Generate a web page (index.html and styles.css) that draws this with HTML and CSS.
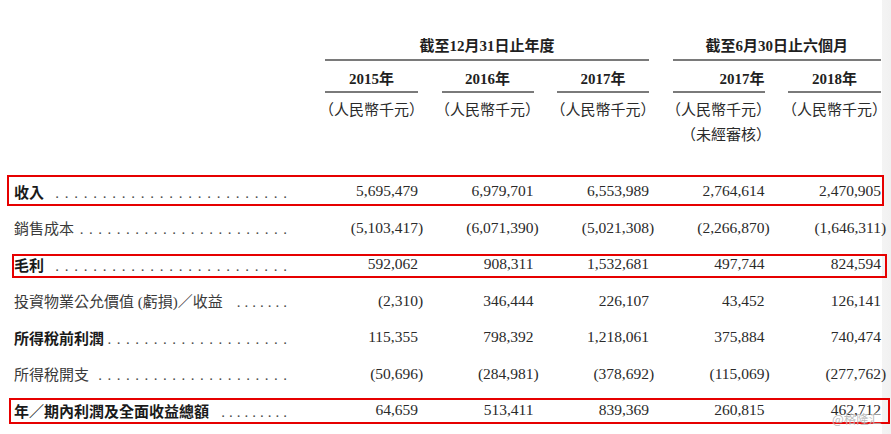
FILE: index.html
```html
<!DOCTYPE html>
<html lang="zh-Hant">
<head>
<meta charset="utf-8">
<title>財務資料</title>
<link rel="stylesheet" href="styles.css">
</head>
<body>
<div class="sheet">
  <div class="head">
    <div class="blank"></div>
    <div class="group g-year">截至12月31日止年度</div>
    <div class="group g-half">截至6月30日止六個月</div>

    <div class="blank"></div>
    <div class="year">2015年</div>
    <div class="year">2016年</div>
    <div class="year">2017年</div>
    <div class="year year-right">2017年</div>
    <div class="year">2018年</div>

    <div class="blank"></div>
    <div class="unit"><span>（人民幣千元）</span></div>
    <div class="unit"><span>（人民幣千元）</span></div>
    <div class="unit"><span>（人民幣千元）</span></div>
    <div class="unit unit-stack"><span>（人民幣千元）</span><span class="audit">（未經審核）</span></div>
    <div class="unit"><span>（人民幣千元）</span></div>
  </div>

  <div class="rows">
    <div class="row strong hl hl-1">
      <div class="label"><span class="txt">收入</span><span class="leader"><span>.........................</span></span></div>
      <div class="num">5,695,479</div>
      <div class="num">6,979,701</div>
      <div class="num">6,553,989</div>
      <div class="num">2,764,614</div>
      <div class="num">2,470,905</div>
    </div>
    <div class="row">
      <div class="label"><span class="txt">銷售成本</span><span class="leader tight"><span>.......................</span></span></div>
      <div class="num"><span class="neg">(5,103,417)</span></div>
      <div class="num"><span class="neg">(6,071,390)</span></div>
      <div class="num"><span class="neg">(5,021,308)</span></div>
      <div class="num"><span class="neg">(2,266,870)</span></div>
      <div class="num"><span class="neg">(1,646,311)</span></div>
    </div>
    <div class="row strong hl hl-2">
      <div class="label"><span class="txt">毛利</span><span class="leader"><span>.........................</span></span></div>
      <div class="num">592,062</div>
      <div class="num">908,311</div>
      <div class="num">1,532,681</div>
      <div class="num">497,744</div>
      <div class="num">824,594</div>
    </div>
    <div class="row">
      <div class="label"><span class="txt">投資物業公允價值 (虧損)／收益</span><span class="leader"><span class="short">.......</span></span></div>
      <div class="num"><span class="neg">(2,310)</span></div>
      <div class="num">346,444</div>
      <div class="num">226,107</div>
      <div class="num">43,452</div>
      <div class="num">126,141</div>
    </div>
    <div class="row strong">
      <div class="label"><span class="txt">所得稅前利潤</span><span class="leader tight"><span>....................</span></span></div>
      <div class="num">115,355</div>
      <div class="num">798,392</div>
      <div class="num">1,218,061</div>
      <div class="num">375,884</div>
      <div class="num">740,474</div>
    </div>
    <div class="row">
      <div class="label"><span class="txt">所得稅開支</span><span class="leader tight"><span>.....................</span></span></div>
      <div class="num"><span class="neg">(50,696)</span></div>
      <div class="num"><span class="neg">(284,981)</span></div>
      <div class="num"><span class="neg">(378,692)</span></div>
      <div class="num"><span class="neg">(115,069)</span></div>
      <div class="num"><span class="neg">(277,762)</span></div>
    </div>
    <div class="row strong hl hl-3">
      <div class="label"><span class="txt">年／期內利潤及全面收益總額</span><span class="leader"><span class="short">.........</span></span></div>
      <div class="num">64,659</div>
      <div class="num">513,411</div>
      <div class="num">839,369</div>
      <div class="num">260,815</div>
      <div class="num">462,712</div>
    </div>
  </div>

  <div class="watermark">@格隆汇</div>
</div>
</body>
</html>
```

FILE: styles.css
```css
html, body {
  margin: 0;
  padding: 0;
}

body {
  width: 891px;
  height: 434px;
  overflow: hidden;
  background: linear-gradient(to right, #ffffff 0, #ffffff 882px, #f4f4f4 882px, #f1f1f1 891px);
  font-family: "Liberation Serif", "Noto Sans CJK TC", serif;
  color: #2a2a2a;
}

.sheet {
  position: relative;
  width: 891px;
  height: 434px;
}

/* ---------- header ---------- */
.head {
  display: grid;
  grid-template-columns: 287.5px 93px 92px 92px 92px 93px;
  column-gap: 23.5px;
  padding-left: 14px;
  color: #1f1f1f;
  font-size: 15px;
}

.group {
  padding-top: 36px;
  padding-bottom: 3px;
  line-height: 20px;
  font-weight: 700;
  text-align: center;
  border-bottom: 2px solid #7a7a7a;
  white-space: nowrap;
}

.g-year {
  grid-column: 2 / 5;
}

.g-half {
  grid-column: 5 / 7;
}

.year {
  padding-top: 8px;
  padding-bottom: 2px;
  line-height: 20px;
  font-weight: 700;
  text-align: center;
  border-bottom: 2px solid #7a7a7a;
  white-space: nowrap;
}

.year-right {
  text-align: right;
}

.unit {
  padding-top: 5px;
  line-height: 25px;
  display: flex;
  flex-direction: column;
  align-items: center;
  white-space: nowrap;
  color: #2a2a2a;
}

.unit-stack {
  margin: 0 -6.5px;
  align-items: flex-end;
}

.audit {
  display: block;
}

/* ---------- body rows ---------- */
.rows {
  margin-top: 25px;
}

.row {
  position: relative;
  display: grid;
  grid-template-columns: 287.5px 93px 92px 92px 92px 93px;
  column-gap: 23.5px;
  padding-left: 14px;
  height: 36.5px;
  align-items: center;
}

.label {
  display: flex;
  align-items: baseline;
  font-size: 15px;
  color: #3a3a3a;
  white-space: nowrap;
  min-width: 0;
}

.strong .label {
  font-weight: 700;
  color: #1a1a1a;
}

.txt {
  flex: none;
}

.leader {
  flex: 1 1 auto;
  min-width: 0;
  display: flex;
  justify-content: flex-end;
  margin-left: 4px;
  padding-right: 14.5px;
  font-weight: 400;
  color: #4a4a4a;
}

.leader.tight {
  margin-left: 2px;
}

.leader > span {
  flex: none;
  letter-spacing: 5.75px;
  margin-right: -5.75px;
}

.leader.tight > span {
  letter-spacing: 5.5px;
  margin-right: -5.5px;
}

.leader > span.short {
  letter-spacing: 4px;
  margin-right: -4px;
}

.num {
  font-size: 15.5px;
  text-align: right;
  white-space: nowrap;
  color: #2a2a2a;
}

.neg {
  margin-right: -0.333em;
}

/* red annotation boxes drawn over the highlighted rows */
.hl::before {
  content: "";
  position: absolute;
  border: 2px solid #e60000;
  pointer-events: none;
}

.hl-1::before {
  top: 2px;
  bottom: 3.5px;
  left: 7px;
  right: 7px;
}

.hl-2::before {
  top: 8px;
  bottom: 4.5px;
  left: 12px;
  right: 4px;
}

.hl-3::before {
  top: 6px;
  bottom: 5px;
  left: 9px;
  right: 1px;
}

/* watermark */
.watermark {
  position: absolute;
  left: 832px;
  top: 411px;
  font-family: "Noto Sans CJK SC", sans-serif;
  font-size: 12.5px;
  line-height: 16px;
  color: rgba(130, 130, 130, 0.55);
  text-shadow: 0 0 1px rgba(255, 255, 255, 0.9);
  white-space: nowrap;
}
```
